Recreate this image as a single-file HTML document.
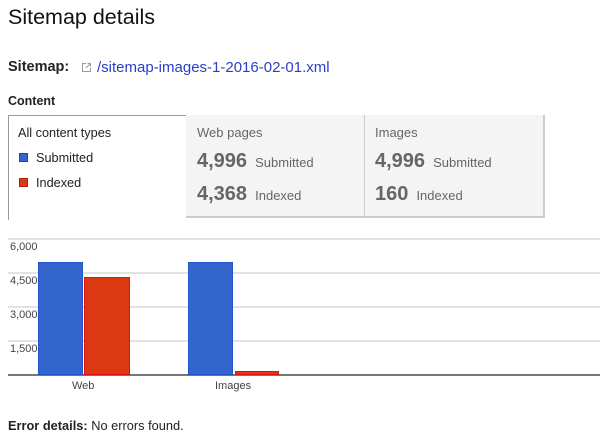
<!DOCTYPE html>
<html><head><style>
body{margin:0;width:600px;height:441px;background:#fff;font-family:"Liberation Sans",Arial,sans-serif;position:relative;overflow:hidden;color:#222}
.a{position:absolute;white-space:nowrap}
.gl{position:absolute;left:8px;right:0;height:2px;background:#e2e2e2}
.bar{position:absolute}
.b{background:#3366cc;border:1px solid #2255cc;box-sizing:border-box}
.r{background:#dc3912;border:1px solid #e01010;box-sizing:border-box}
.num{font-weight:bold;font-size:20px;color:#666}
.sm{font-size:13px;color:#666}
</style></head><body>
<div class="a" style="left:8px;top:5px;font-size:21.5px;color:#111">Sitemap details</div>
<div class="a" style="left:8px;top:59px;font-size:14.5px;font-weight:bold">Sitemap:</div>
<svg class="a" style="left:81px;top:62px" width="11" height="11" viewBox="0 0 11 11"><path d="M5 1.5H1.5v8h8V6" fill="none" stroke="#999" stroke-width="1"/><path d="M6.5 1.5h3v3M9.5 1.5L5 6" fill="none" stroke="#999" stroke-width="1"/></svg>
<div class="a" style="left:97px;top:59px;font-size:15px;color:#2a3fc8">/sitemap-images-1-2016-02-01.xml</div>
<div class="a" style="left:8px;top:94px;font-size:12.5px;font-weight:bold">Content</div>

<div class="a" style="left:8px;top:115px;width:178px;height:105px;border-left:1px solid #999;border-top:1px solid #999;background:#fff;box-sizing:border-box"></div>
<div class="a" style="left:186px;top:115px;width:359px;height:103px;background:#f4f4f4;border-bottom:2px solid #ccc;border-right:2px solid #ccc;box-sizing:border-box"></div>
<div class="a" style="left:364px;top:115px;width:1px;height:101px;background:#ccc"></div>
<div class="a" style="left:18px;top:126px;font-size:12.7px;color:#222">All content types</div>
<div class="a" style="left:19px;top:153px;width:9px;height:9px;background:#3366cc;border:1px solid #2244aa;box-sizing:border-box"></div>
<div class="a" style="left:36px;top:151px;font-size:12.7px">Submitted</div>
<div class="a" style="left:19px;top:178px;width:9px;height:9px;background:#dc3912;border:1px solid #b02010;box-sizing:border-box"></div>
<div class="a" style="left:36px;top:176px;font-size:12.7px">Indexed</div>

<div class="a sm" style="left:197px;top:125px">Web pages</div>
<div class="a" style="left:197px;top:150px"><span class="num">4,996</span> <span class="sm">&nbsp;Submitted</span></div>
<div class="a" style="left:197px;top:183px"><span class="num">4,368</span> <span class="sm">&nbsp;Indexed</span></div>
<div class="a sm" style="left:375px;top:125px">Images</div>
<div class="a" style="left:375px;top:150px"><span class="num">4,996</span> <span class="sm">&nbsp;Submitted</span></div>
<div class="a" style="left:375px;top:183px"><span class="num">160</span> <span class="sm">&nbsp;Indexed</span></div>

<div class="gl" style="top:238px"></div>
<div class="gl" style="top:272px"></div>
<div class="gl" style="top:306px"></div>
<div class="gl" style="top:340px"></div>
<div class="a" style="left:8px;right:0;top:374px;height:2px;background:#777"></div>
<div class="a" style="left:10px;top:241px;font-size:11px;color:#444">6,000</div>
<div class="a" style="left:10px;top:275px;font-size:11px;color:#444">4,500</div>
<div class="a" style="left:10px;top:309px;font-size:11px;color:#444">3,000</div>
<div class="a" style="left:10px;top:343px;font-size:11px;color:#444">1,500</div>
<div class="bar b" style="left:38px;top:262px;width:45px;height:113px"></div>
<div class="bar r" style="left:84px;top:277px;width:46px;height:98px"></div>
<div class="bar b" style="left:188px;top:262px;width:45px;height:113px"></div>
<div class="bar r" style="left:235px;top:371px;width:44px;height:4px"></div>
<div class="a" style="left:72px;top:380px;font-size:11px;color:#444">Web</div>
<div class="a" style="left:215px;top:380px;font-size:11px;color:#444">Images</div>
<div class="a" style="left:8px;top:418px;font-size:12.8px"><b>Error details:</b> No errors found.</div>
</body></html>
